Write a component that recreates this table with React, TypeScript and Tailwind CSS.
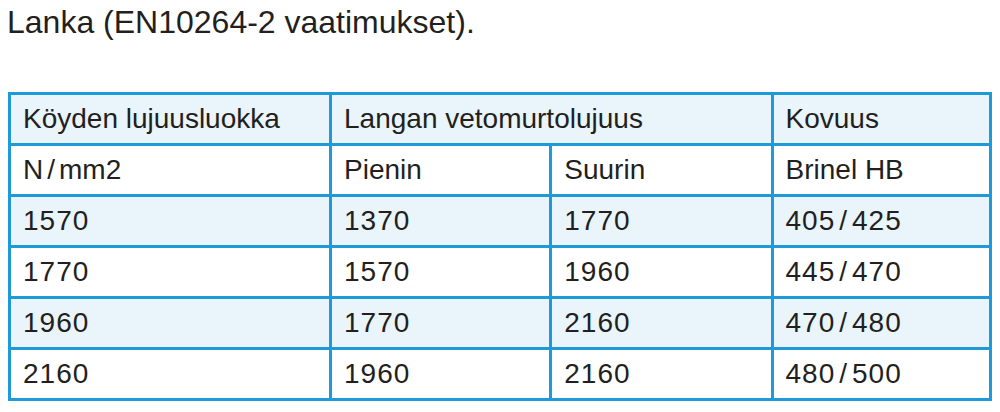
import React from "react";

const rows = [
  ["1570", "1370", "1770", "405/425"],
  ["1770", "1570", "1960", "445/470"],
  ["1960", "1770", "2160", "470/480"],
  ["2160", "1960", "2160", "480/500"],
];

function Txt({ s }: { s: string }) {
  const parts = s.split("/");
  if (parts.length === 1) return <>{s}</>;
  return (
    <>
      {parts[0]}
      <span className="mx-[4px]">/</span>
      {parts[1]}
    </>
  );
}

export default function App() {
  const cell = "border-[3px] border-[#1f9ad8] pl-[12px] text-left font-normal align-middle h-[51px] p-0";
  return (
    <div className="w-[1000px] h-[412px] bg-white text-[#231f20] overflow-hidden" style={{ fontFamily: '"Liberation Sans", Arial, sans-serif' }}>
      <div className="pl-[7px] pt-[2px] text-[32px] leading-[40px]">Lanka (EN10264-2 vaatimukset).</div>
      <table className="ml-[8px] mt-[50px] border-collapse text-[28px]" style={{ width: 984 }}>
        <colgroup>
          <col style={{ width: 322 }} />
          <col style={{ width: 221 }} />
          <col style={{ width: 222 }} />
          <col style={{ width: 219 }} />
        </colgroup>
        <tbody>
          <tr className="bg-[#e9f4fb]">
            <td className={cell}>Köyden lujuusluokka</td>
            <td className={cell} colSpan={2}>Langan vetomurtolujuus</td>
            <td className={cell}>Kovuus</td>
          </tr>
          <tr className="bg-white">
            <td className={cell}><Txt s="N/mm2" /></td>
            <td className={cell}>Pienin</td>
            <td className={cell}>Suurin</td>
            <td className={cell}>Brinel HB</td>
          </tr>
          {rows.map((r, i) => (
            <tr key={i} className={i % 2 === 0 ? "bg-[#e9f4fb]" : "bg-white"}>
              {r.map((c, j) => (
                <td key={j} className={cell + " tracking-[1px]"}><Txt s={c} /></td>
              ))}
            </tr>
          ))}
        </tbody>
      </table>
    </div>
  );
}
